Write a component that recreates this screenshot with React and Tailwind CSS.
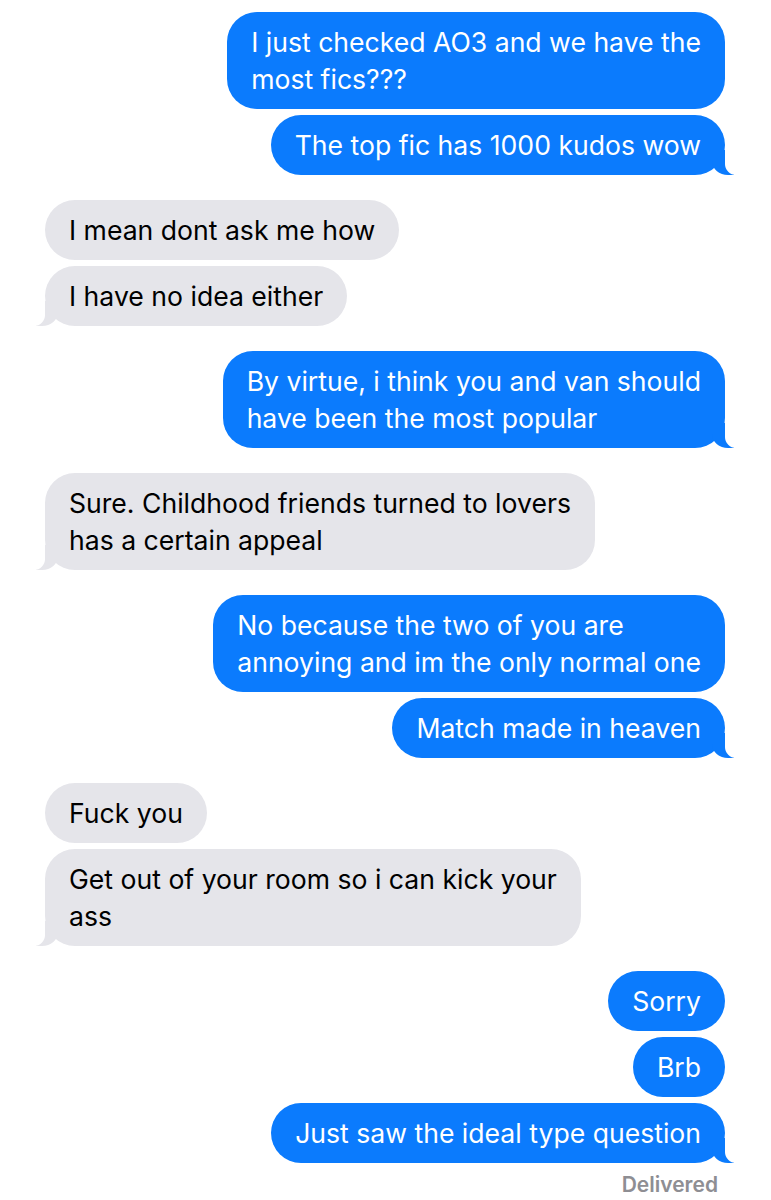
import React from 'react';

const groups = [
  { me: true, msgs: [['I just checked AO3 and we have the', 'most fics???'], ['The top fic has 1000 kudos wow']] },
  { me: false, msgs: [['I mean dont ask me how'], ['I have no idea either']] },
  { me: true, msgs: [['By virtue, i think you and van should', 'have been the most popular']] },
  { me: false, msgs: [['Sure. Childhood friends turned to lovers', 'has a certain appeal']] },
  { me: true, msgs: [['No because the two of you are', 'annoying and im the only normal one'], ['Match made in heaven']] },
  { me: false, msgs: [['Fuck you'], ['Get out of your room so i can kick your', 'ass']] },
  { me: true, msgs: [['Sorry'], ['Brb'], ['Just saw the ideal type question']] },
];

const Bubble = ({ me, lines, tail }) => (
  <div
    className={`relative rounded-[30px] px-6 py-[11.5px] text-[26.6px] leading-[37px] whitespace-nowrap ${
      me ? 'bg-[#0b7bfd] text-white' : 'bg-[#e5e5ea] text-black'
    }`}
  >
    {lines.map((l, i) => (
      <div key={i}>{l}</div>
    ))}
    {tail && me && (
      <>
        <span className="absolute bottom-0 right-[-9px] h-[25px] w-[22px] bg-[#0b7bfd] rounded-bl-[16px_14px]" />
        <span className="absolute bottom-0 right-[-28px] h-[25px] w-[28px] bg-white rounded-bl-[11px]" />
      </>
    )}
    {tail && !me && (
      <>
        <span className="absolute bottom-0 left-[-9px] h-[25px] w-[22px] bg-[#e5e5ea] rounded-br-[16px_14px]" />
        <span className="absolute bottom-0 left-[-28px] h-[25px] w-[28px] bg-white rounded-br-[11px]" />
      </>
    )}
  </div>
);

export default function App() {
  return (
    <div
      className="min-h-[1200px] bg-white pt-3 pl-[45px] pr-[46px] flex flex-col gap-[25px]"
      style={{ fontFamily: 'Inter, "Noto Sans", sans-serif' }}
    >
      {groups.map((g, gi) => (
        <div key={gi} className={`flex flex-col gap-[6px] ${g.me ? 'items-end' : 'items-start'}`}>
          {g.msgs.map((m, mi) => (
            <Bubble key={mi} me={g.me} lines={m} tail={mi === g.msgs.length - 1} />
          ))}
          {gi === groups.length - 1 && (
            <div className="mt-[4px] mr-[7px] text-[21px] leading-[24px] font-semibold text-[#8e8e93]">
              Delivered
            </div>
          )}
        </div>
      ))}
    </div>
  );
}
